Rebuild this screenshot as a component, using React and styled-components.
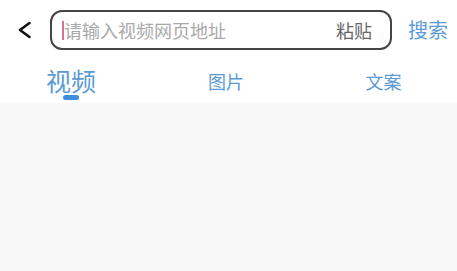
import React from 'react'
import styled, { createGlobalStyle } from 'styled-components'

const GlobalStyle = createGlobalStyle`
  html, body {
    margin: 0;
    padding: 0;
    background: #f8f8f8;
  }
  body {
    font-family: "Noto Sans CJK SC", "Noto Sans", sans-serif;
  }
`

const Page = styled.div`
  width: 457px;
  height: 271px;
  background: #f8f8f8;
  overflow: hidden;
`

const Header = styled.div`
  background: #fff;
  height: 103px;
  display: flex;
  flex-direction: column;
`

const SearchRow = styled.div`
  display: flex;
  align-items: center;
  height: 40px;
  padding: 10px 0 0 0;
`

const BackButton = styled.button`
  width: 50px;
  height: 40px;
  border: none;
  background: none;
  padding: 0 0 0 16px;
  display: flex;
  align-items: center;
  cursor: pointer;
`

const SearchBox = styled.div`
  box-sizing: border-box;
  width: 342px;
  height: 40px;
  border: 2px solid #454545;
  border-radius: 12px;
  display: flex;
  align-items: center;
  padding: 0 18px 0 10px;
`

const Caret = styled.span`
  width: 2px;
  height: 19px;
  background: #d8709a;
  margin-right: 0;
  margin-top: 1px;
`

const Placeholder = styled.span`
  flex: 1;
  font-size: 18px;
  color: #a9a9a9;
  line-height: 1;
`

const PasteButton = styled.span`
  font-size: 18px;
  color: #666;
  line-height: 1;
`

const SearchButton = styled.span`
  margin-left: 16px;
  font-size: 20px;
  color: #5b9bd5;
  line-height: 1;
`

const Tabs = styled.div`
  display: grid;
  grid-template-columns: 142px 168px 147px;
  margin-top: 10px;
  height: 43px;
`

const Tab = styled.div`
  display: flex;
  flex-direction: column;
  align-items: center;
  justify-content: flex-start;
  color: #5b9bd5;
  font-size: ${p => (p.$active ? '25px' : '18px')};
  line-height: 1;
  padding-top: ${p => (p.$active ? '8px' : '12px')};
`

const Indicator = styled.span`
  margin-top: 2px;
  width: 16px;
  height: 5px;
  border-radius: 3px;
  background: #3e8fdf;
`

const tabs = ['视频', '图片', '文案']

export default function App() {
  return (
    <Page>
      <GlobalStyle />
      <Header>
        <SearchRow>
          <BackButton>
            <svg width="17" height="18" viewBox="0 0 17 18">
              <path d="M13.5 2 L4 9 L13.5 16" fill="none" stroke="#111" strokeWidth="2.6" strokeLinecap="round" strokeLinejoin="round" />
            </svg>
          </BackButton>
          <SearchBox>
            <Caret />
            <Placeholder>请输入视频网页地址</Placeholder>
            <PasteButton>粘贴</PasteButton>
          </SearchBox>
          <SearchButton>搜索</SearchButton>
        </SearchRow>
        <Tabs>
          {tabs.map((t, i) => (
            <Tab key={t} $active={i === 0}>
              {t}
              {i === 0 && <Indicator />}
            </Tab>
          ))}
        </Tabs>
      </Header>
    </Page>
  )
}
